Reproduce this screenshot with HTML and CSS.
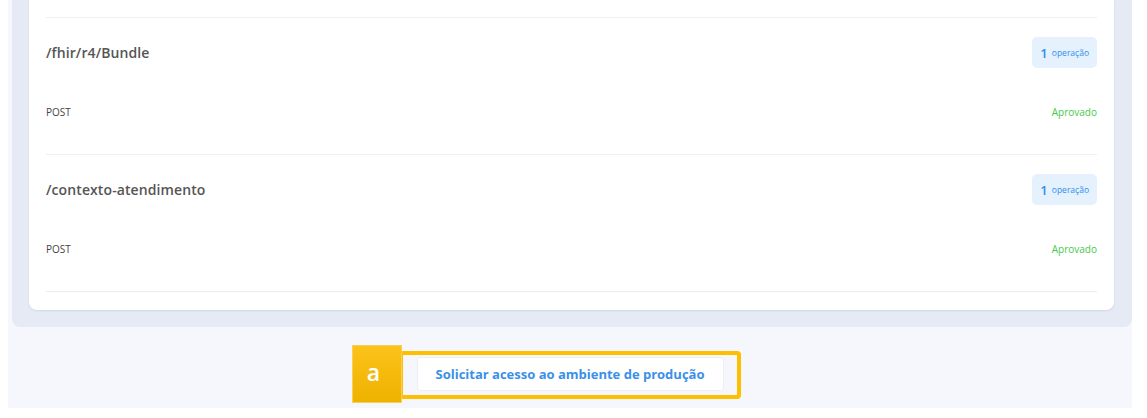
FILE: index.html
```html
<!DOCTYPE html>
<html lang="pt">
<head>
<meta charset="utf-8">
<link rel="stylesheet" href="styles.css">
</head>
<body>
<div class="page">
  <div class="panel">
    <div class="card">
      <div class="row">
        <div class="row-head">
          <span class="path">/fhir/r4/Bundle</span>
          <span class="badge"><b>1</b> operação</span>
        </div>
        <div class="row-op">
          <span class="method">POST</span>
          <span class="status">Aprovado</span>
        </div>
      </div>
      <div class="row">
        <div class="row-head">
          <span class="path">/contexto-atendimento</span>
          <span class="badge"><b>1</b> operação</span>
        </div>
        <div class="row-op">
          <span class="method">POST</span>
          <span class="status">Aprovado</span>
        </div>
      </div>
      <div class="row-end"></div>
    </div>
  </div>
  <div class="footer">
    <div class="annot">
      <button class="btn">Solicitar acesso ao ambiente de produção</button>
      <span class="annot-box"></span>
      <span class="annot-label">a</span>
    </div>
  </div>
</div>
</body>
</html>
```

FILE: styles.css
```css
html, body {
  margin: 0;
  padding: 0;
  background: #ffffff;
  font-family: "Open Sans", "Liberation Sans", sans-serif;
}

.page {
  margin-left: 8px;
  width: 1124px;
  height: 408px;
  background: #f6f7fc;
}

.panel {
  margin-left: 4px;
  width: 1120px;
  box-sizing: border-box;
  padding: 0 18px 17px 17px;
  background: #e6eaf4;
  border-radius: 0 0 8px 8px;
}

.card {
  background: #ffffff;
  border-radius: 0 0 8px 8px;
  padding: 17px 17px 18px 17px;
  box-shadow: 0 1px 2px rgba(170, 180, 205, 0.35);
}

.row {
  border-top: 1px solid #eef0f6;
  padding: 19px 0 35px;
}

.row-end {
  border-top: 1px solid #eaedf4;
}

.row-head {
  display: flex;
  justify-content: space-between;
  align-items: center;
  height: 31px;
}

.path {
  font-size: 14px;
  font-weight: 600;
  color: #555555;
  letter-spacing: 0.1px;
}

.badge {
  display: flex;
  align-items: center;
  gap: 4px;
  height: 31px;
  box-sizing: border-box;
  padding: 0 8px;
  background: #e5f1fd;
  border-radius: 5px;
  color: #2f8ff0;
  font-size: 8.5px;
}

.badge b {
  font-size: 13px;
  font-weight: 600;
}

.row-op {
  display: flex;
  justify-content: space-between;
  align-items: center;
  margin-top: 37px;
  height: 14px;
  font-size: 10px;
}

.method {
  color: #444444;
}

.status {
  color: #45c84a;
}

.footer {
  display: flex;
  justify-content: center;
  padding-top: 30px;
}

.annot {
  position: relative;
}

.btn {
  display: block;
  width: 307px;
  height: 34px;
  background: #ffffff;
  border: 1px solid #eceff5;
  border-radius: 3px;
  color: #3a90e8;
  font-family: "Open Sans", "Liberation Sans", sans-serif;
  font-size: 13px;
  font-weight: 700;
  padding: 0;
}

.annot-box {
  position: absolute;
  left: -18px;
  right: -17px;
  top: -6px;
  bottom: -8px;
  border: 4px solid #fdbf00;
  border-radius: 4px;
}

.annot-label {
  position: absolute;
  left: -65px;
  top: -12px;
  width: 50px;
  height: 58px;
  display: flex;
  align-items: center;
  justify-content: center;
  background: linear-gradient(#fdc21a, #eeb200);
  border: 1px solid #fbcf55;
  box-sizing: border-box;
  color: #ffffff;
  font-family: "Open Sans", "Liberation Sans", sans-serif;
  font-size: 23px;
  font-weight: 600;
  padding: 0 6px 4px 0;
}
```
